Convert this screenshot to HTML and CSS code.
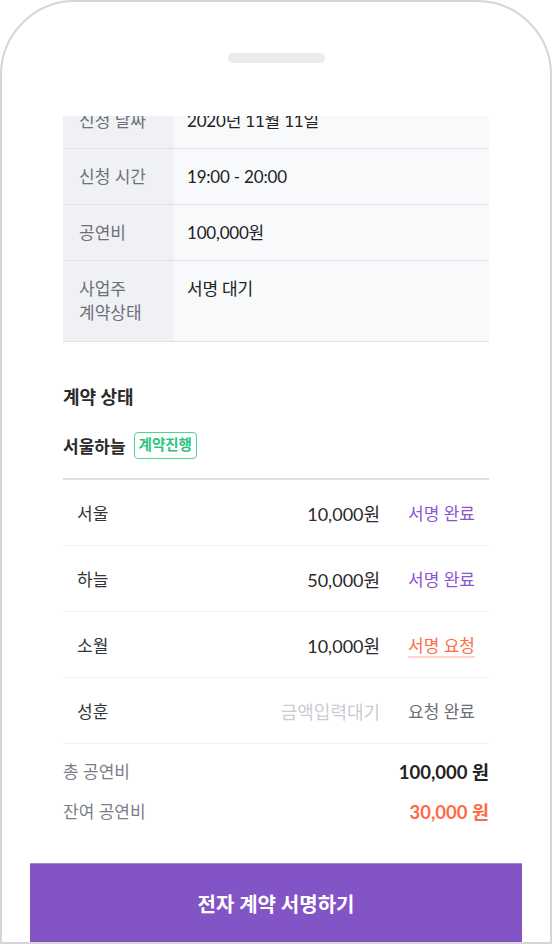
FILE: index.html
```html
<!DOCTYPE html>
<html lang="ko">
<head>
<meta charset="utf-8">
<title>계약 상태</title>
<link rel="stylesheet" href="styles.css">
</head>
<body>
<div class="phone">
  <div class="top"><div class="notch"></div></div>
  <div class="content">
    <div class="info">
      <div class="info-row"><div class="info-label">신청 날짜</div><div class="info-value">2020년 11월 11일</div></div>
      <div class="info-row"><div class="info-label">신청 시간</div><div class="info-value">19:00 - 20:00</div></div>
      <div class="info-row"><div class="info-label">공연비</div><div class="info-value">100,000원</div></div>
      <div class="info-row info-row-last"><div class="info-label">사업주<br>계약상태</div><div class="info-value">서명 대기</div></div>
    </div>

    <h2 class="section-title">계약 상태</h2>
    <div class="team">
      <span class="team-name">서울하늘</span>
      <span class="badge">계약진행</span>
    </div>

    <ul class="members">
      <li class="member"><span class="m-name">서울</span><span class="m-amount">10,000원</span><span class="m-status done">서명 완료</span></li>
      <li class="member"><span class="m-name">하늘</span><span class="m-amount">50,000원</span><span class="m-status done">서명 완료</span></li>
      <li class="member"><span class="m-name">소월</span><span class="m-amount">10,000원</span><span class="m-status request">서명 요청</span></li>
      <li class="member"><span class="m-name">성훈</span><span class="m-amount pending">금액입력대기</span><span class="m-status sent">요청 완료</span></li>
    </ul>

    <div class="totals">
      <div class="total-row"><span class="t-label">총 공연비</span><span class="t-value">100,000 원</span></div>
      <div class="total-row"><span class="t-label">잔여 공연비</span><span class="t-value remain">30,000 원</span></div>
    </div>
  </div>
  <button class="cta">전자 계약 서명하기</button>
</div>
</body>
</html>
```

FILE: styles.css
```css
* { box-sizing: border-box; }
html, body { margin: 0; padding: 0; background: #fff; }
body {
  font-family: "Lato", "Noto Sans CJK KR", sans-serif;
  color: #222;
  width: 552px;
  height: 944px;
  overflow: hidden;
}
.phone {
  width: 552px;
  height: 944px;
  border: 2px solid #d6d6d6;
  border-radius: 75px 75px 0 0;
  display: flex;
  flex-direction: column;
  overflow: hidden;
  background: #fff;
}
.top {
  height: 114px;
  flex: none;
  display: flex;
  justify-content: center;
  padding-top: 51px;
}
.notch {
  width: 97px;
  height: 10px;
  border-radius: 5px;
  background: #ebebeb;
}
.content {
  flex: 1;
  overflow: hidden;
  padding: 0 61px;
}
.info {
  margin-top: -23px;
}
.info-row {
  display: flex;
  border-bottom: 1px solid #dfe0e8;
  font-size: 17px;
  line-height: 24px;
}
.info-label {
  width: 111px;
  flex: none;
  background: #f0f1f5;
  color: #6d7079;
  padding: 16px 0 15px 16px;
}
.info-value {
  flex: 1;
  background: #f8f9fb;
  color: #222;
  padding: 16px 0 15px 13px;
  letter-spacing: -0.2px;
}
.info-row-last .info-label,
.info-row-last .info-value { padding-bottom: 16px; }

.section-title {
  margin: 43px 0 0;
  font-size: 18px;
  line-height: 24px;
  font-weight: 700;
  color: #2a2a2a;
}
.team {
  margin-top: 23px;
  display: flex;
  align-items: center;
  gap: 8px;
  height: 27px;
}
.team-name {
  font-size: 17px;
  font-weight: 700;
  color: #2a2a2a;
}
.badge {
  height: 27px;
  padding: 0 4px;
  border: 1.5px solid #4fd592;
  border-radius: 4px;
  color: #2cc47c;
  font-size: 14.5px;
  font-weight: 700;
  line-height: 24px;
}
.members {
  list-style: none;
  margin: 19px 0 0;
  padding: 0;
  border-top: 2px solid #dedde9;
}
.member {
  display: flex;
  align-items: center;
  height: 66px;
  padding: 0 14px;
  border-bottom: 1px solid #f0f0f6;
  font-size: 17px;
}
.m-name { flex: 1; color: #333; }
.m-amount { color: #2a2a2a; font-size: 18px; }
.m-amount.pending { color: #cbccd2; }
.m-status { margin-left: 28px; }
.m-status.done { color: #8a55d0; }
.m-status.request {
  color: #ff6a48;
  text-decoration: underline;
  text-decoration-color: #ffd5cb;
  text-decoration-thickness: 2px;
  text-underline-offset: 4px;
}
.m-status.sent { color: #6c6f76; }

.totals {
  margin-top: 16px;
  display: flex;
  flex-direction: column;
  gap: 16px;
}
.total-row {
  display: flex;
  justify-content: space-between;
  align-items: center;
  line-height: 24px;
  font-size: 17px;
}
.t-label { color: #7b7e86; }
.t-value { font-weight: 700; font-size: 18.5px; color: #222; }
.t-value.remain { color: #ff6a45; }

.cta {
  flex: none;
  margin: 0 28px;
  height: 79px;
  border: none;
  border-top: 1px solid #a186d8;
  background: #8354c6;
  color: #fff;
  font-family: "Lato", "Noto Sans CJK KR", sans-serif;
  font-size: 20px;
  font-weight: 700;
  cursor: pointer;
}
```
